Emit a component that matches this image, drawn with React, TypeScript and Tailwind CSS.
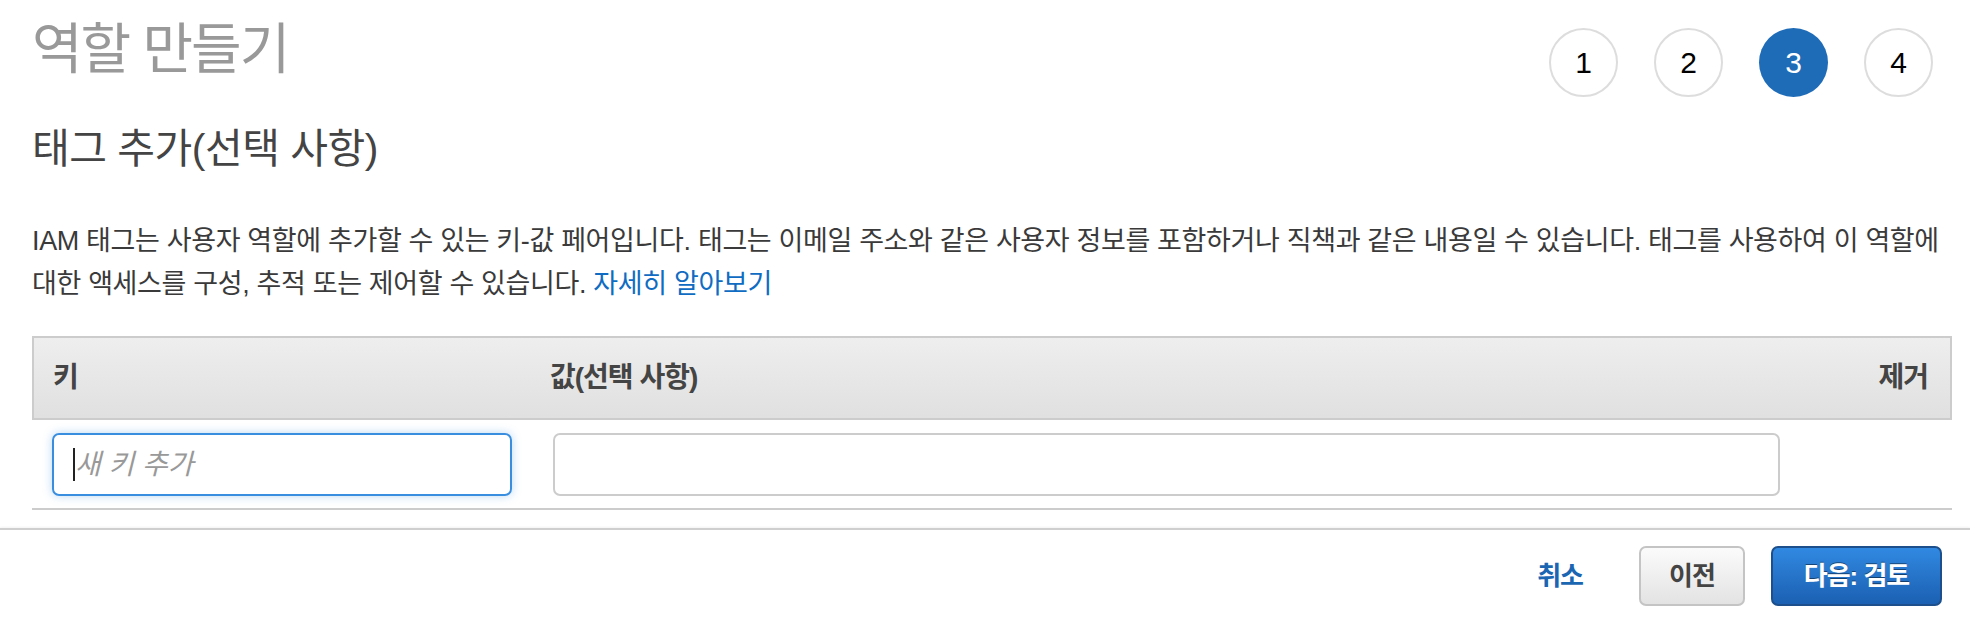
import React from 'react';

const font = "font-['Liberation_Sans','Noto_Sans_CJK_KR',sans-serif]";

const steps = [1, 2, 3, 4];

export default function App() {
  return (
    <div className={`${font} w-[1970px] h-[624px] bg-white overflow-hidden`}>
      <div className="pl-[32px] pr-[18px]">
        {/* Header */}
        <div className="flex items-start justify-between">
          <h1 className="pt-[19px] text-[55px] leading-[60px] tracking-[-2px] text-[#999] font-normal">
            역할 만들기
          </h1>
          <div className="pt-[28px] mr-[19px] flex gap-[36px]">
            {steps.map((s) => (
              <div
                key={s}
                className={
                  s === 3
                    ? 'w-[69px] h-[69px] rounded-full bg-[#1e6bb8] text-white flex items-center justify-center text-[30px]'
                    : 'w-[69px] h-[69px] rounded-full border-2 border-[#dddddd] text-black flex items-center justify-center text-[30px]'
                }
              >
                {s}
              </div>
            ))}
          </div>
        </div>

        <h2 className="mt-[27px] text-[41px] leading-[50px] tracking-[-0.5px] text-[#444]">
          태그 추가(선택 사항)
        </h2>

        <p className="mt-[46px] text-[27px] leading-[43px] tracking-[-0.35px] text-[#3a3a3a] whitespace-nowrap">
          IAM 태그는 사용자 역할에 추가할 수 있는 키-값 페어입니다. 태그는 이메일 주소와 같은 사용자 정보를 포함하거나 직책과 같은 내용일 수 있습니다. 태그를 사용하여 이 역할에
          <br />
          대한 액세스를 구성, 추적 또는 제어할 수 있습니다.{' '}
          <a className="text-[#0f6cc2]" href="#">자세히 알아보기</a>
        </p>

        {/* Tag table */}
        <div className="mt-[30px]">
          <div className="grid grid-cols-[498px_1fr_auto] items-center h-[84px] border-2 border-[#cccccc] bg-gradient-to-b from-[#eeeeee] to-[#e0e0e0] text-[28px] font-bold text-[#444] tracking-[-1px]">
            <div className="pl-[19px]">키</div>
            <div className="pl-[18px]">값(선택 사항)</div>
            <div className="pr-[22px]">제거</div>
          </div>
          <div className="grid grid-cols-[500px_1fr_172px] pt-[13px] pb-[12px] border-b-2 border-[#cccccc]">
            <div className="px-[20px]">
              <div className="relative">
                <input
                  className="w-full h-[63px] rounded-[7px] border-2 border-[#3a8ee0] shadow-[0_0_10px_rgba(58,142,224,0.35)] pl-[21px] text-[28px] italic outline-none placeholder:text-[#999] placeholder:italic"
                  placeholder="새 키 추가"
                />
                <span className="absolute left-[21px] top-[15px] w-[2px] h-[33px] bg-[#222]" />
              </div>
            </div>
            <div className="pl-[21px]">
              <input className="w-full h-[63px] rounded-[7px] border-2 border-[#cccccc] outline-none" />
            </div>
            <div />
          </div>
        </div>
      </div>

      {/* Footer */}
      <div className="mt-[18px] border-t-2 border-[#cfcfcf] shadow-[0_-1px_2px_rgba(0,0,0,0.05)] pt-[16px] pr-[28px] flex items-center justify-end text-[26px] font-bold tracking-[-1px]">
        <button className="text-[#1a66b3] mr-[56px]">취소</button>
        <button className="w-[106px] h-[60px] rounded-[7px] border-2 border-[#c4c4c4] bg-gradient-to-b from-[#fbfbfb] to-[#e3e3e3] text-[#444] mr-[26px]">
          이전
        </button>
        <button className="w-[171px] h-[60px] rounded-[7px] border-2 border-[#1c4f8c] bg-gradient-to-b from-[#3189e1] to-[#1b60b2] text-white [text-shadow:0_-1px_0_rgba(0,0,0,0.45)]">
          다음: 검토
        </button>
      </div>
    </div>
  );
}
